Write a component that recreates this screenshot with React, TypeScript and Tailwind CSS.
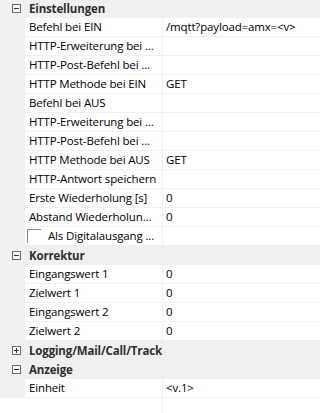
import { ReactNode } from "react"

type Row =
  | { kind: "cat"; label: string; open: boolean }
  | { kind: "prop"; label: string; value?: string }
  | { kind: "check"; label: string }

const rows: Row[] = [
  { kind: "cat", label: "Einstellungen", open: true },
  { kind: "prop", label: "Befehl bei EIN", value: "/mqtt?payload=amx=<v>" },
  { kind: "prop", label: "HTTP-Erweiterung bei ..." },
  { kind: "prop", label: "HTTP-Post-Befehl bei ..." },
  { kind: "prop", label: "HTTP Methode bei EIN", value: "GET" },
  { kind: "prop", label: "Befehl bei AUS" },
  { kind: "prop", label: "HTTP-Erweiterung bei ..." },
  { kind: "prop", label: "HTTP-Post-Befehl bei ..." },
  { kind: "prop", label: "HTTP Methode bei AUS", value: "GET" },
  { kind: "prop", label: "HTTP-Antwort speichern" },
  { kind: "prop", label: "Erste Wiederholung [s]", value: "0" },
  { kind: "prop", label: "Abstand Wiederholun...", value: "0" },
  { kind: "check", label: "Als Digitalausgang ..." },
  { kind: "cat", label: "Korrektur", open: true },
  { kind: "prop", label: "Eingangswert 1", value: "0" },
  { kind: "prop", label: "Zielwert 1", value: "0" },
  { kind: "prop", label: "Eingangswert 2", value: "0" },
  { kind: "prop", label: "Zielwert 2", value: "0" },
  { kind: "cat", label: "Logging/Mail/Call/Track", open: false },
  { kind: "cat", label: "Anzeige", open: true },
  { kind: "prop", label: "Einheit", value: "<v.1>" },
]

function ExpandBox({ open }: { open: boolean }) {
  return (
    <svg width="9" height="9" viewBox="0 0 9 9" className="block">
      <rect x="0.5" y="0.5" width="8" height="8" fill="#fff" stroke="#6d6d6d" />
      <line x1="2" y1="4.5" x2="7" y2="4.5" stroke="#333" />
      {!open && <line x1="4.5" y1="2" x2="4.5" y2="7" stroke="#333" />}
    </svg>
  )
}

function Cell({ children, className = "" }: { children?: ReactNode; className?: string }) {
  return (
    <div className={"h-full flex items-center overflow-hidden whitespace-nowrap " + className}>
      {children}
    </div>
  )
}

export default function App() {
  return (
    <div
      className="w-[320px] h-[413px] bg-white overflow-hidden text-[11.5px] tracking-[-0.15px] text-black"
      style={{ fontFamily: '"Open Sans", "Noto Sans", sans-serif' }}
    >
      <div className="-mt-px">
        {rows.map((r, i) =>
          r.kind === "cat" ? (
            <div key={i} className="h-[19px] flex items-center bg-[#f0f0f0]">
              <div className="w-[25px] flex justify-end pr-[4px]">
                <ExpandBox open={r.open} />
              </div>
              <span className="font-bold text-[#2f2f2f] pl-[4px]">{r.label}</span>
            </div>
          ) : (
            <div key={i} className="h-[19px] flex bg-[#f0f0f0]">
              <div className="w-[25px] shrink-0" />
              <div className="flex-1 flex bg-white border-b border-[#f0f0f0]">
                <Cell className="w-[138px] pl-[4px] border-r border-[#f0f0f0]">
                  {r.kind === "check" ? (
                    <>
                      <span className="w-[14px] h-[14px] ml-[-2px] mr-[7px] border-t border-l border-[#8a8a8a] shrink-0" />
                      {r.label}
                    </>
                  ) : (
                    r.label
                  )}
                </Cell>
                <Cell className="flex-1 pl-[3px]">{r.kind === "prop" ? r.value : null}</Cell>
              </div>
            </div>
          )
        )}
        <div className="flex h-[40px]">
          <div className="w-[163px] border-r border-[#f0f0f0]" />
        </div>
      </div>
    </div>
  )
}
